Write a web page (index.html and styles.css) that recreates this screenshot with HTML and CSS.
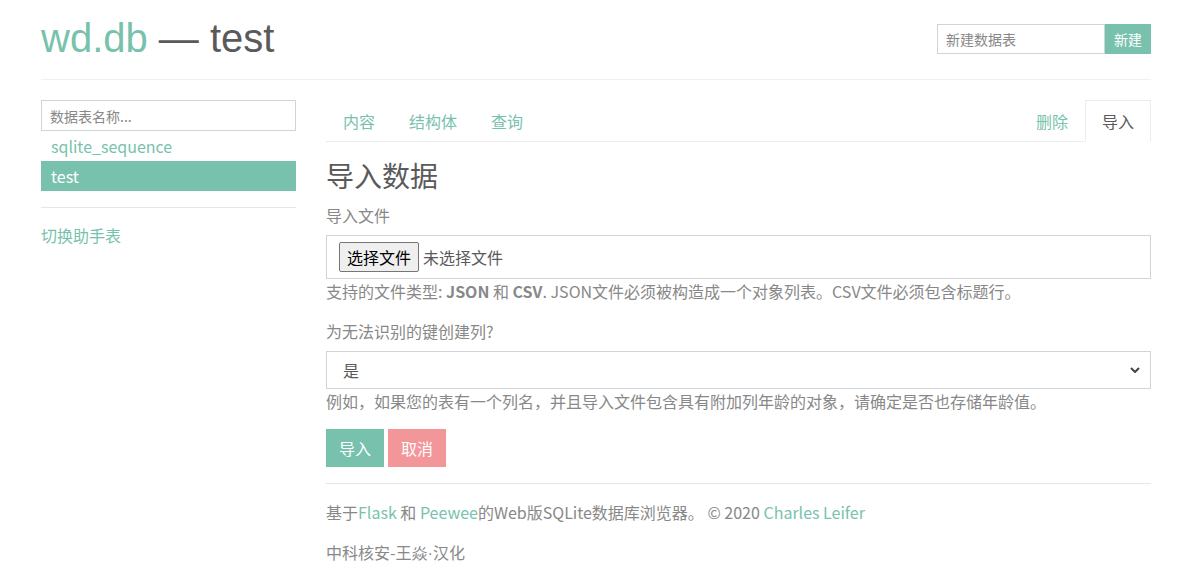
FILE: index.html
```html
<!DOCTYPE html>
<html lang="zh">
<head>
<meta charset="utf-8">
<title>wd.db — test</title>
<link rel="stylesheet" href="styles.css">
</head>
<body>
<div class="container">
  <header class="page-header">
    <h1 class="title"><a class="brand" href="#">wd.db</a> — test</h1>
    <form class="new-table">
      <input class="input-sm new-input" type="text" placeholder="新建数据表">
      <button class="btn-new" type="button">新建</button>
    </form>
  </header>

  <div class="row">
    <aside class="sidebar">
      <input class="input-sm search" type="text" placeholder="数据表名称...">
      <ul class="table-list">
        <li><a class="table-link" href="#">sqlite_sequence</a></li>
        <li><a class="table-link active" href="#">test</a></li>
      </ul>
      <hr class="divider">
      <a class="toggle" href="#">切换助手表</a>
    </aside>

    <main class="content">
      <nav class="tabs">
        <a class="tab" href="#">内容</a>
        <a class="tab" href="#">结构体</a>
        <a class="tab" href="#">查询</a>
        <a class="tab push" href="#">删除</a>
        <a class="tab active" href="#">导入</a>
      </nav>

      <h3 class="heading">导入数据</h3>

      <div class="form-group">
        <label class="label">导入文件</label>
        <div class="file-control">
          <span class="file-btn">选择文件</span>
          <span class="file-name">未选择文件</span>
        </div>
        <p class="help">支持的文件类型: <strong>JSON</strong> 和 <strong>CSV</strong>. JSON文件必须被构造成一个对象列表。CSV文件必须包含标题行。</p>
      </div>

      <div class="form-group">
        <label class="label">为无法识别的键创建列?</label>
        <div class="select-control">
          <span>是</span>
          <svg class="chevron" width="10" height="6" viewBox="0 0 10 6"><path d="M1 1 L5 5 L9 1" fill="none" stroke="#444" stroke-width="2"/></svg>
        </div>
        <p class="help">例如，如果您的表有一个列名，并且导入文件包含具有附加列年龄的对象，请确定是否也存储年龄值。</p>
      </div>

      <div class="actions">
        <button class="btn btn-primary" type="button">导入</button>
        <button class="btn btn-danger" type="button">取消</button>
      </div>

      <hr class="divider footer-rule">
      <footer class="footer">
        <p>基于<a href="#">Flask</a> 和 <a href="#">Peewee</a>的Web版SQLite数据库浏览器。 © 2020 <a href="#">Charles Leifer</a></p>
        <p>中科核安-王焱<span class="dot">·</span>汉化</p>
      </footer>
    </main>
  </div>
</div>
</body>
</html>
```

FILE: styles.css
```css
* { box-sizing: border-box; }

html, body {
  margin: 0;
  padding: 0;
  background: #fff;
}

body {
  font-family: "Noto Sans CJK SC", "Noto Sans", sans-serif;
  font-size: 16px;
  line-height: 1.5;
  color: #888;
}

a { color: #78c2ad; text-decoration: none; }

.container {
  width: 1110px;
  margin-left: 41px;
}

.page-header {
  display: flex;
  justify-content: space-between;
  align-items: center;
  padding-top: 14px;
  padding-bottom: 17px;
  border-bottom: 1px solid #f0f0f0;
}

.title {
  margin: 0;
  font-family: "Liberation Sans", "Noto Sans CJK SC", sans-serif;
  font-size: 40px;
  font-weight: 400;
  line-height: 1.2;
  color: #5a5a5a;
}

.new-table {
  display: flex;
  margin: 2px 0 0;
}

.input-sm {
  height: 31px;
  padding: 4px 8px;
  font-family: "Noto Sans CJK SC", sans-serif;
  font-size: 14px;
  line-height: 21px;
  color: #5a5a5a;
  border: 1px solid #ced4da;
  border-radius: 0;
  background: #fff;
  outline: none;
}
.input-sm::placeholder { color: #888; }

.new-input { width: 168px; height: 30px; }

.btn-new {
  width: 46px;
  height: 30px;
  border: none;
  background: #78c2ad;
  color: #fff;
  font-family: "Noto Sans CJK SC", sans-serif;
  font-size: 14px;
  padding: 0;
}

.row {
  display: flex;
  gap: 30px;
  margin-top: 20px;
}

.sidebar {
  width: 255px;
  flex: none;
}

.search { width: 100%; display: block; }

.table-list {
  list-style: none;
  margin: 0;
  padding: 0;
}

.table-link {
  display: block;
  padding: 3px 10px;
  line-height: 24px;
  font-size: 16px;
}
.table-link.active {
  background: #78c2ad;
  color: #fff;
}

.divider {
  border: 0;
  border-top: 1px solid #e6e6e6;
  margin: 16px 0;
}

.toggle {
  display: block;
  line-height: 24px;
  margin-top: -1px;
}

.content {
  flex: 1;
  min-width: 0;
}

.tabs {
  display: flex;
  border-bottom: 1px solid #ececec;
}

.tab {
  display: block;
  padding: 8px 16px;
  line-height: 24px;
  border: 1px solid transparent;
  margin-bottom: -1px;
}
.tab.push { margin-left: auto; }
.tab.active {
  color: #5a5a5a;
  border-color: #ececec #ececec #fff;
  background: #fff;
}

.heading {
  margin: 19px 0 8px;
  font-family: "Liberation Sans", "Noto Sans CJK SC", sans-serif;
  font-size: 28px;
  font-weight: 400;
  line-height: 1.2;
  color: #5a5a5a;
}

.form-group { margin-bottom: 16px; }

.label {
  display: block;
  line-height: 24px;
  margin-bottom: 8px;
}

.file-control {
  display: flex;
  align-items: center;
  gap: 4px;
  height: 44px;
  padding: 6px 12px;
  border: 1px solid #ced4da;
}

.file-btn {
  display: inline-block;
  height: 30px;
  padding: 0 7px;
  line-height: 28px;
  color: #000;
  background: #efefef;
  border: 1px solid #767676;
  border-radius: 2px;
}

.file-name { color: #5a5a5a; }

.help {
  margin: 0;
  line-height: 24px;
  color: #888;
}
.help strong { font-weight: 700; color: #888; }

.select-control {
  display: flex;
  justify-content: space-between;
  align-items: center;
  height: 38px;
  padding: 0 10px 0 16px;
  border: 1px solid #ced4da;
  color: #5a5a5a;
}

.chevron { display: block; }

.actions {
  display: flex;
  gap: 4px;
}

.btn {
  height: 38px;
  padding: 0 12px;
  border: 1px solid transparent;
  font-family: "Noto Sans CJK SC", sans-serif;
  font-size: 16px;
  line-height: 24px;
  color: #fff;
  border-radius: 0;
}
.btn-primary { background: #78c2ad; border-color: #78c2ad; }
.btn-danger { background: #f3969a; border-color: #f3969a; }

.footer-rule { margin-top: 16px; }

.footer p {
  margin: 0 0 16px;
  line-height: 24px;
}

.dot { font-family: "Liberation Sans", sans-serif; }
```
